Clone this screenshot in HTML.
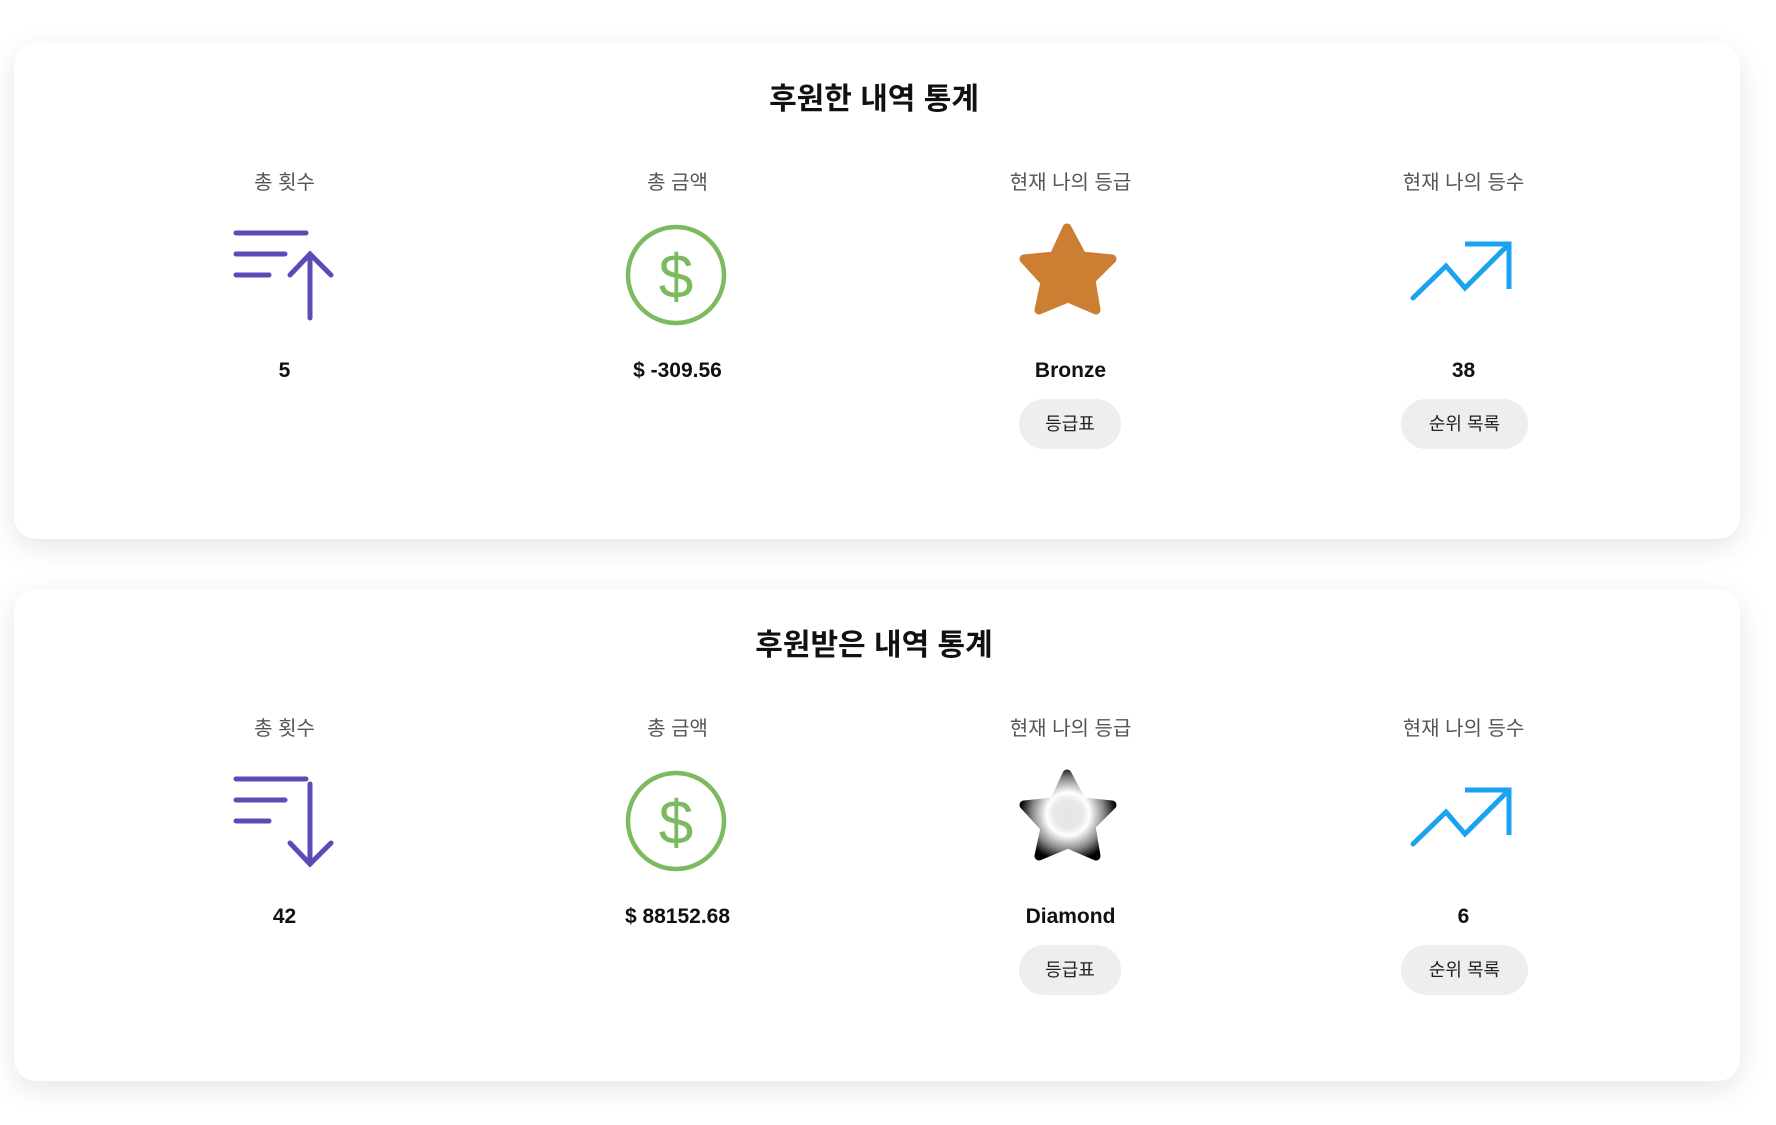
<!DOCTYPE html>
<html><head><meta charset="utf-8"><style>
body{margin:0;width:1776px;height:1125px;background:#fff;position:relative;overflow:hidden;font-family:"Liberation Sans","Noto Sans CJK KR",sans-serif}
.card{position:absolute;left:14px;width:1726px;background:#fff;border-radius:22px;box-shadow:0 8px 28px rgba(0,0,0,0.10)}
.t{position:absolute;left:0;width:100%;text-align:center;font-weight:bold;font-size:30px;color:#111}
.lab{position:absolute;text-align:center;font-size:20px;color:#555;top:-13px}
.val{position:absolute;text-align:center;font-size:21px;font-weight:bold;color:#111;top:-13px}
.btn{position:absolute;height:50px;line-height:50px;background:#eee;border-radius:25px;font-size:18px;color:#222;text-align:center}
svg{position:absolute;left:0;top:0}
</style></head><body>

<div class="card" style="top:43px;height:496px"></div>
<div class="card" style="top:589px;height:492px"></div>

<div style="position:absolute;left:0;top:0;width:1776px;height:546px">
<div class="t" style="top:74px;left:0;width:1748px">후원한 내역 통계</div>
<div class="lab" style="top:166px;left:88px;width:393px">총 횟수</div>
<div class="lab" style="top:166px;left:481px;width:393px">총 금액</div>
<div class="lab" style="top:166px;left:874px;width:393px">현재 나의 등급</div>
<div class="lab" style="top:166px;left:1267px;width:393px">현재 나의 등수</div>
<div class="val" style="top:359px;left:88px;width:393px">5</div>
<div class="val" style="top:359px;left:481px;width:393px">$ -309.56</div>
<div class="val" style="top:359px;left:874px;width:393px">Bronze</div>
<div class="val" style="top:359px;left:1267px;width:393px">38</div>
<div class="btn" style="top:399px;left:1019px;width:102px">등급표</div>
<div class="btn" style="top:399px;left:1401px;width:127px">순위 목록</div>
<svg width="1776" height="546">
<g stroke="#5a4bb5" stroke-width="5" stroke-linecap="round" fill="none">
<path d="M236 233H306M236 254H285M236 275H269M310 256V318M290 275L310 254L331 275"/></g>
<ellipse cx="676" cy="275" rx="48" ry="48" stroke="#7cba5f" stroke-width="4.5" fill="none"/>
<text x="676" y="298" text-anchor="middle" font-family="Liberation Sans" font-size="62" fill="#7cba5f">$</text>
<path d="M1067 228L1082 256L1112 259L1091 280L1096 310L1068 298L1039 310L1045 282L1024 259L1054 256Z" fill="#cc7f33" stroke="#cc7f33" stroke-width="9" stroke-linejoin="round"/>
<g stroke="#1aa3f0" stroke-width="5" fill="none" stroke-linecap="round"><path d="M1413 298L1446 266L1465 288L1509 244"/><path d="M1465 244H1509V289" stroke-linecap="butt"/></g>
</svg>
</div>

<div style="position:absolute;left:0;top:546px;width:1776px;height:546px">
<div class="t" style="top:74px;left:0;width:1748px">후원받은 내역 통계</div>
<div class="lab" style="top:166px;left:88px;width:393px">총 횟수</div>
<div class="lab" style="top:166px;left:481px;width:393px">총 금액</div>
<div class="lab" style="top:166px;left:874px;width:393px">현재 나의 등급</div>
<div class="lab" style="top:166px;left:1267px;width:393px">현재 나의 등수</div>
<div class="val" style="top:359px;left:88px;width:393px">42</div>
<div class="val" style="top:359px;left:481px;width:393px">$ 88152.68</div>
<div class="val" style="top:359px;left:874px;width:393px">Diamond</div>
<div class="val" style="top:359px;left:1267px;width:393px">6</div>
<div class="btn" style="top:399px;left:1019px;width:102px">등급표</div>
<div class="btn" style="top:399px;left:1401px;width:127px">순위 목록</div>
<svg width="1776" height="546">
<defs><radialGradient id="g" cx="1068" cy="268" r="48" gradientUnits="userSpaceOnUse">
<stop offset="0" stop-color="#e4e4e4"/><stop offset="0.3" stop-color="#e8e8e8"/><stop offset="0.45" stop-color="#fff"/><stop offset="0.75" stop-color="#888"/><stop offset="1" stop-color="#000"/></radialGradient></defs>
<g stroke="#5a4bb5" stroke-width="5" stroke-linecap="round" fill="none">
<path d="M236 233H306M236 254H285M236 275H269M310 238V318M290 297L310 318L331 297"/></g>
<ellipse cx="676" cy="275" rx="48" ry="48" stroke="#7cba5f" stroke-width="4.5" fill="none"/>
<text x="676" y="298" text-anchor="middle" font-family="Liberation Sans" font-size="62" fill="#7cba5f">$</text>
<path d="M1067 228L1082 256L1112 259L1091 280L1096 310L1068 298L1039 310L1045 282L1024 259L1054 256Z" fill="url(#g)" stroke="url(#g)" stroke-width="9" stroke-linejoin="round"/>
<g stroke="#1aa3f0" stroke-width="5" fill="none" stroke-linecap="round"><path d="M1413 298L1446 266L1465 288L1509 244"/><path d="M1465 244H1509V289" stroke-linecap="butt"/></g>
</svg>
</div>
</body></html>
